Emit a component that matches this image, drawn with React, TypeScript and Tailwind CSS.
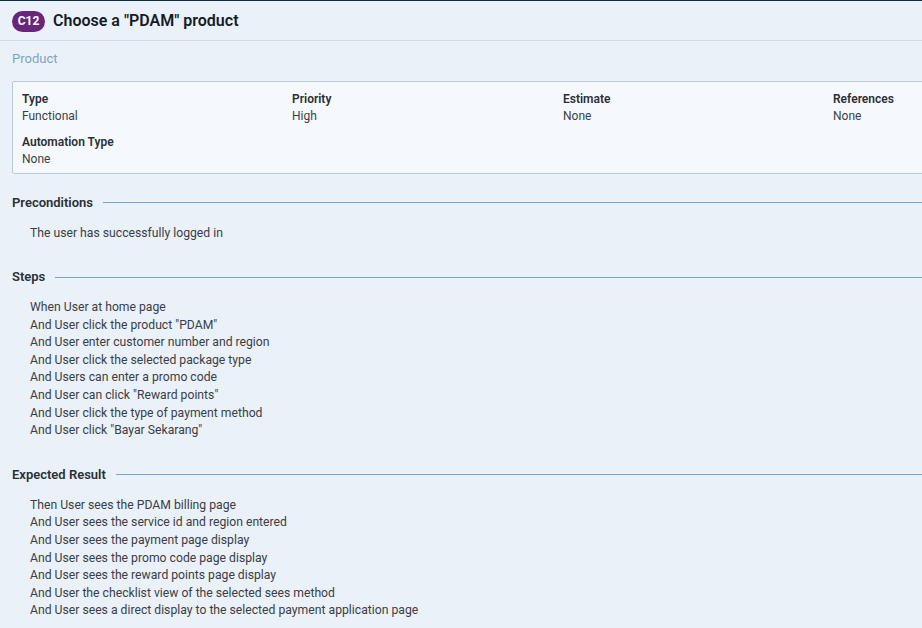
import React from 'react';

const fields = [
  { label: 'Type', value: 'Functional' },
  { label: 'Priority', value: 'High' },
  { label: 'Estimate', value: 'None' },
  { label: 'References', value: 'None' },
  { label: 'Automation Type', value: 'None' },
];

const steps = [
  'When User at home page',
  'And User click the product "PDAM"',
  'And User enter customer number and region',
  'And User click the selected package type',
  'And Users can enter a promo code',
  'And User can click "Reward points"',
  'And User click the type of payment method',
  'And User click "Bayar Sekarang"',
];

const expected = [
  'Then User sees the PDAM billing page',
  'And User sees the service id and region entered',
  'And User sees the payment page display',
  'And User sees the promo code page display',
  'And User sees the reward points page display',
  'And User the checklist view of the selected sees method',
  'And User sees a direct display to the selected payment application page',
];

function Section({ title, lines }: { title: string; lines: string[] }) {
  return (
    <section className="mb-[25px]">
      <div className="flex items-center gap-[10px] pl-[12px]">
        <h3 className="text-[13px] font-semibold text-[#2b2f36] whitespace-nowrap leading-[20px]">{title}</h3>
        <div className="flex-1 h-px bg-[#73a6d2]" />
      </div>
      <div className="pl-[30px] pt-[12px] text-[12.2px] leading-[17.6px] text-[#3a3e46]">
        {lines.map((l, i) => (
          <div key={i}>{l}</div>
        ))}
      </div>
    </section>
  );
}

export default function App() {
  return (
    <div className="w-[922px] h-[628px] overflow-hidden bg-[#eaf1f8] font-['Roboto',sans-serif] border-t border-[#0c2a48]">
      <header className="flex items-center gap-[8px] px-[12px] pt-[1px] h-[40px] border-b border-[#cfdce7]">
        <span className="bg-[#68267a] text-white text-[12px] font-bold rounded-full w-[33px] h-[21px] flex items-center justify-center">
          C12
        </span>
        <h1 className="text-[16px] font-semibold text-[#161b26]">Choose a "PDAM" product</h1>
      </header>

      <div className="px-[12px] pt-[8px] text-[13px] text-[#7fa3c9]">Product</div>

      <div className="ml-[12px] mt-[12px] mb-[19px] w-[930px] bg-[#f5f9fd] border border-[#b8cadb] rounded-[2px] px-[9px] pt-[9px] pb-[5px]">
        <div className="grid grid-cols-[270px_271px_270px_120px] gap-y-[9px]">
          {fields.map((f) => (
            <div key={f.label} className="leading-[17px]">
              <div className="text-[12px] font-semibold text-[#2b2f36]">{f.label}</div>
              <div className="text-[12px] text-[#3a3f47]">{f.value}</div>
            </div>
          ))}
        </div>
      </div>

      <Section title="Preconditions" lines={['The user has successfully logged in']} />
      <Section title="Steps" lines={steps} />
      <Section title="Expected Result" lines={expected} />
    </div>
  );
}
